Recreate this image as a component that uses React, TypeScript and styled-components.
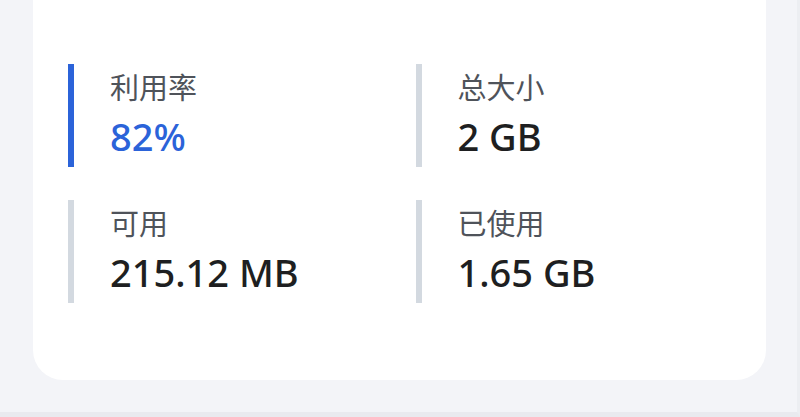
import React from "react";
import styled, { createGlobalStyle } from "styled-components";

const Global = createGlobalStyle`
  html, body { margin: 0; padding: 0; }
  body {
    background: #f3f4f8;
    font-family: "Noto Sans", "Noto Sans CJK SC", sans-serif;
    overflow: hidden;
  }
`;

const Page = styled.div`
  width: 800px;
  height: 417px;
  box-sizing: border-box;
  padding: 0 31px 0 33px;
  border-bottom: 5px solid #e9eaef;
  border-right: 3px solid #eceef2;
`;

const Card = styled.div`
  background: #ffffff;
  border-radius: 0 0 30px 30px;
  padding: 64px 38px 77px 35px;
  display: grid;
  grid-template-columns: 1fr 1fr;
  column-gap: 35px;
  row-gap: 33px;
`;

const Item = styled.div`
  display: flex;
  align-items: stretch;
  height: 103px;
`;

const Bar = styled.div<{ $active?: boolean }>`
  width: 6px;
  flex: none;
  background: ${(p) => (p.$active ? "#2b63d9" : "#d3d9e0")};
`;

const Content = styled.div`
  padding: 6px 0 0 36px;
  display: flex;
  flex-direction: column;
  gap: 6px;
`;

const Label = styled.div`
  font-size: 29px;
  line-height: 36px;
  color: #4f535a;
  font-family: "Noto Sans", "Noto Sans CJK SC", sans-serif;
`;

const Value = styled.div<{ $active?: boolean }>`
  font-size: 38px;
  line-height: 48px;
  font-weight: 500;
  color: ${(p) => (p.$active ? "#2b63d9" : "#1e1f21")};
`;

const stats = [
  { label: "利用率", value: "82%", active: true },
  { label: "总大小", value: "2 GB" },
  { label: "可用", value: "215.12 MB" },
  { label: "已使用", value: "1.65 GB" },
];

export default function App() {
  return (
    <>
      <Global />
      <Page>
        <Card>
          {stats.map((s) => (
            <Item key={s.label}>
              <Bar $active={s.active} />
              <Content>
                <Label>{s.label}</Label>
                <Value $active={s.active}>{s.value}</Value>
              </Content>
            </Item>
          ))}
        </Card>
      </Page>
    </>
  );
}
